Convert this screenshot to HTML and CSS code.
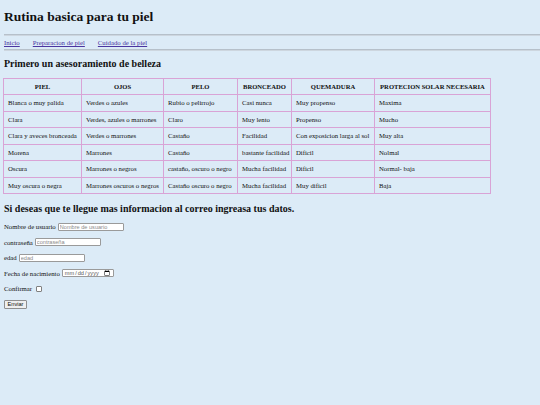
FILE: index.html
```html
<!DOCTYPE html>
<html lang="es">
<head>
    <meta charset="UTF-8">
    <meta name="viewport" content="width=device-width, initial-scale=1.0">
    <title>Rutina basica para tu piel</title>
    <link rel="stylesheet" href="styles.css">
</head>
<body>
    <header>
        <h1 class="page-title">Rutina basica para tu piel</h1>
        <hr class="rule">
        <nav class="main-nav">
            <a href="#">Inicio</a>
            <a href="#">Preparacion de piel</a>
            <a href="#">Cuidado de la piel</a>
        </nav>
        <hr class="rule">
    </header>

    <h2 class="section-title">Primero un asesoramiento de belleza</h2>

    <table class="skin-table">
        <colgroup>
            <col style="width: 78px">
            <col style="width: 82px">
            <col style="width: 74px">
            <col style="width: 54px">
            <col style="width: 83px">
            <col style="width: 116px">
        </colgroup>
        <thead>
            <tr>
                <th>PIEL</th>
                <th>OJOS</th>
                <th>PELO</th>
                <th>BRONCEADO</th>
                <th>QUEMADURA</th>
                <th>PROTECION SOLAR NECESARIA</th>
            </tr>
        </thead>
        <tbody>
            <tr>
                <td>Blanca o muy palida</td>
                <td>Verdes o azules</td>
                <td>Rubio o pelirrojo</td>
                <td>Casi nunca</td>
                <td>Muy propenso</td>
                <td>Maxima</td>
            </tr>
            <tr>
                <td>Clara</td>
                <td>Verdes, azules o marrones</td>
                <td>Claro</td>
                <td>Muy lento</td>
                <td>Propenso</td>
                <td>Mucho</td>
            </tr>
            <tr>
                <td>Clara y aveces bronceada</td>
                <td>Verdes o marrones</td>
                <td>Castaño</td>
                <td>Facilidad</td>
                <td>Con exposicion larga al sol</td>
                <td>Muy alta</td>
            </tr>
            <tr>
                <td>Morena</td>
                <td>Marrones</td>
                <td>Castaño</td>
                <td>bastante facilidad</td>
                <td>Dificil</td>
                <td>Nolmal</td>
            </tr>
            <tr>
                <td>Oscura</td>
                <td>Marrones o negros</td>
                <td>castaño, oscuro o negro</td>
                <td>Mucha facilidad</td>
                <td>Dificil</td>
                <td>Normal- baja</td>
            </tr>
            <tr>
                <td>Muy oscura o negra</td>
                <td>Marrones oscuros o negros</td>
                <td>Castaño oscuro o negro</td>
                <td>Mucha facilidad</td>
                <td>Muy dificil</td>
                <td>Baja</td>
            </tr>
        </tbody>
    </table>

    <h2 class="section-title form-title">Si deseas que te llegue mas informacion al correo ingreasa tus datos.</h2>

    <form class="info-form">
        <div class="form-row">
            <label for="usuario">Nombre de usuario</label>
            <input type="text" id="usuario" placeholder="Nombre de usuario">
        </div>
        <div class="form-row">
            <label for="clave">contraseña</label>
            <input type="password" id="clave" class="short" placeholder="contraseña">
        </div>
        <div class="form-row">
            <label for="edad">edad</label>
            <input type="text" id="edad" class="short" placeholder="edad">
        </div>
        <div class="form-row">
            <label for="fecha">Fecha de nacimiento</label>
            <input type="date" id="fecha" class="date">
        </div>
        <div class="form-row">
            <label for="confirmar">Confirmar</label>
            <input type="checkbox" id="confirmar" class="check">
        </div>
        <div class="form-row">
            <button type="button" class="send">Enviar</button>
        </div>
    </form>
</body>
</html>
```

FILE: styles.css
```css
html {
    background-color: #dcebf7;
}

body {
    margin: 0;
    padding: 0 4px;
    font-family: "Liberation Serif", "Times New Roman", serif;
    font-size: 6.75px;
    color: #111;
}

.page-title {
    font-size: 13.5px;
    line-height: 15px;
    margin: 9px 0 10px;
}

.rule {
    height: 0;
    margin: 0 -4px 0 0;
    border: 0;
    border-top: 1px solid #b6c0ca;
    border-bottom: 1px solid #cdd6df;
}

.main-nav {
    display: flex;
    gap: 13px;
    line-height: 13px;
}

.main-nav a {
    color: #4a35a0;
}

.section-title {
    font-size: 10px;
    line-height: 12px;
    margin: 7px 0 7.5px;
}

.skin-table {
    border-collapse: collapse;
    table-layout: fixed;
    width: 487px;
    margin-left: -1px;
}

.skin-table th,
.skin-table td {
    border: 1px solid #d9a3d6;
    padding: 4px 4px 3.5px;
    line-height: 8px;
    text-align: left;
    white-space: nowrap;
    overflow: hidden;
}

.skin-table th {
    text-align: center;
    font-size: 6.6px;
}

.form-title {
    margin: 8.5px 0 8px;
}

.info-form {
    display: flex;
    flex-direction: column;
    gap: 7px;
}

.form-row {
    display: flex;
    align-items: center;
    gap: 2px;
    height: 8.5px;
}

.form-row input {
    box-sizing: border-box;
    width: 66px;
    height: 8px;
    padding: 0 1px;
    font-family: Arial, "Liberation Sans", sans-serif;
    font-size: 5.6px;
    border: 1px solid #9a9a9a;
    border-radius: 1px;
    background: #fff;
}

.form-row input::placeholder {
    color: #8a8a8a;
}

.form-row input.date {
    width: 52px;
    color: #555;
}

.form-row input.check {
    appearance: none;
    width: 5.5px;
    height: 5.5px;
    margin: 0 0 0 2px;
    padding: 0;
    border: 1px solid #808080;
    border-radius: 1px;
}

.send {
    box-sizing: border-box;
    width: 23px;
    height: 9px;
    padding: 0;
    font-family: Arial, "Liberation Sans", sans-serif;
    font-size: 5.6px;
    border: 1px solid #8f8f8f;
    border-radius: 1px;
    background: #efefef;
    color: #111;
}
```
